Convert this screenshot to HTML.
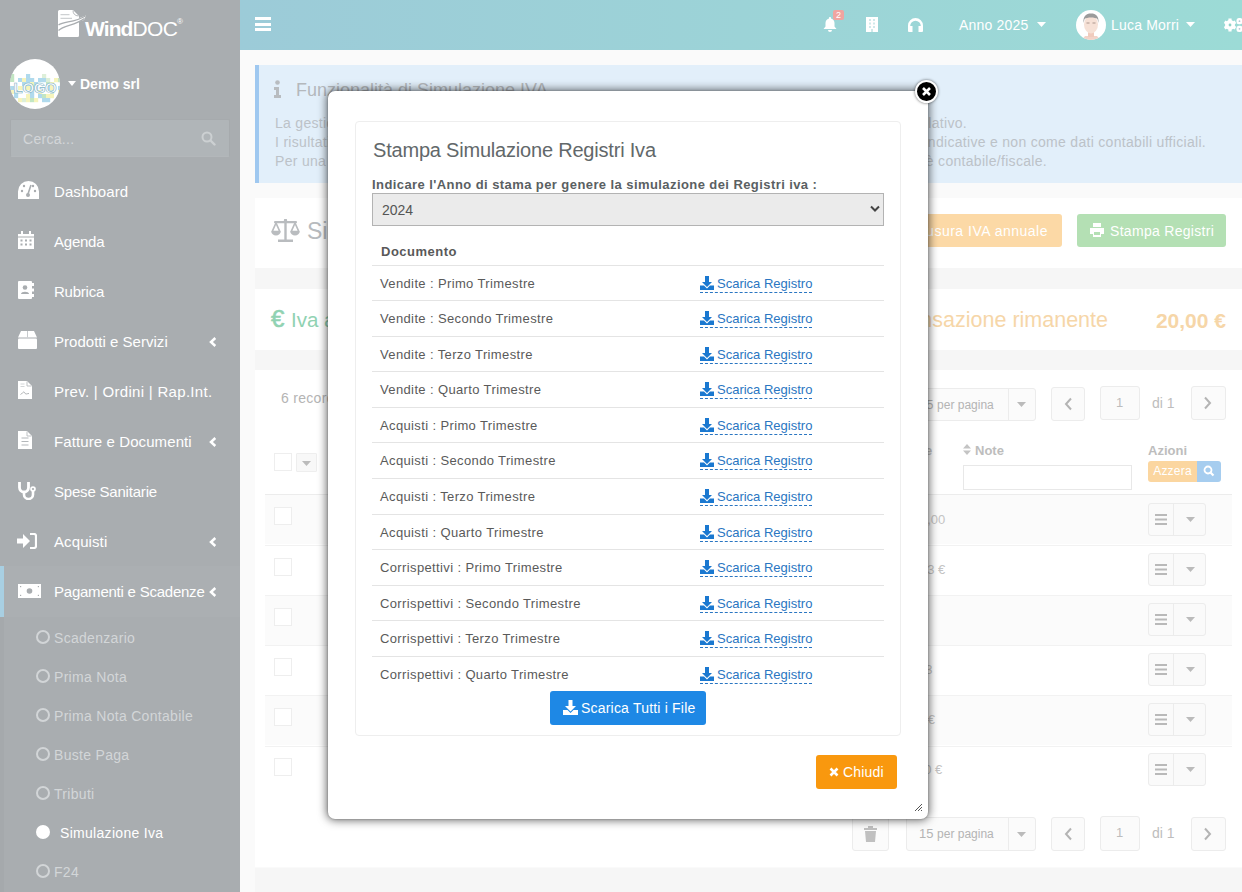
<!DOCTYPE html>
<html><head><meta charset="utf-8">
<style>
*{box-sizing:border-box;margin:0;padding:0}
html,body{width:1242px;height:892px;overflow:hidden}
body{position:relative;background:#fafafa;font-family:"Liberation Sans",sans-serif;color:#333}
.a{position:absolute;white-space:nowrap}
#side{position:absolute;left:0;top:0;width:240px;height:892px;background:#a9adb0}
#hdr{position:absolute;left:240px;top:0;width:1002px;height:50px;background:linear-gradient(90deg,#9ccbd8,#9cdbd6)}
.mi{position:absolute;left:54px;color:#fff;font-size:15px;line-height:20px;white-space:nowrap;letter-spacing:.1px}
.sub{position:absolute;left:54px;color:#d3d6d8;font-size:14px;line-height:20px;white-space:nowrap;letter-spacing:.3px}
.ico{position:absolute;left:17px}
.chev{position:absolute;left:207px;width:10px;height:12px}
.circ{position:absolute;left:36px;width:14px;height:14px;border:2px solid #d2d5d7;border-radius:50%}
.box{position:absolute;left:255px;width:987px;background:#fff}
#modal{position:absolute;left:328px;top:91px;width:600px;height:728px;background:#fff;border-radius:7px;box-shadow:0 0 2px rgba(0,0,0,.3),0 0 10px 1px rgba(0,0,0,.62)}
#panel{position:absolute;left:27px;top:30px;width:546px;height:615px;border:1px solid #eeeeee;border-radius:4px}
.row{position:absolute;left:44px;width:512px;height:36px;border-top:1px solid #e4e4e4}
.rt{position:absolute;left:8px;top:9px;font-size:13px;line-height:18px;color:#5a5a5a;white-space:nowrap;letter-spacing:.37px}
.lk{position:absolute;left:328px;top:9px;font-size:13px;line-height:18px;color:#2a76c2;white-space:nowrap;letter-spacing:0}
.lk .u{position:absolute;left:0;right:0;top:17px;border-bottom:1px dashed #2a76c2}
.lk svg{vertical-align:-2px;margin-right:3px}
.gbtn{position:absolute;border:1px solid #ececec;border-radius:3px;background:#fbfbfb}
.cb{position:absolute;left:274px;width:18px;height:18px;border:1px solid #eeeeee;background:#fff}
.trow{position:absolute;left:265px;width:967px;height:50px;border-top:1px solid #f2f2f2}
.act{position:absolute;left:1148px;width:58px;height:33px;border:1px solid #ececec;border-radius:3px;background:#fafafa}
.act:after{content:"";position:absolute;left:24px;top:0;bottom:0;border-left:1px solid #ececec}
</style></head>
<body>

<!-- SIDEBAR -->
<div id="side">
  <!-- logo -->
  <svg class="a" style="left:57px;top:9px" width="30" height="29" viewBox="0 0 30 29">
    <path d="M2.5 1h13.5l6 6v19.5a1.5 1.5 0 0 1-1.5 1.5H2.5A1.5 1.5 0 0 1 1 26.5V2.5A1.5 1.5 0 0 1 2.5 1z" fill="#fff"/>
    <path d="M16 1.5q0 5 5.5 5.5" fill="none" stroke="#b5b8bb" stroke-width="1"/>
    <rect x="3.5" y="5.2" width="9" height="1" fill="#c3c6c9"/>
    <rect x="3.5" y="8.8" width="11.5" height="1" fill="#c3c6c9"/>
    <path d="M21 9.5L29 6.5L27 11L21 13z" fill="#fff"/>
    <path d="M1.5 16C7 12 17 14 28.5 7" fill="none" stroke="#a9adb0" stroke-width="1.3"/>
    <path d="M1.5 21.5C7 16 17 17 27.5 9.5" fill="none" stroke="#a9adb0" stroke-width="1.3"/>
  </svg>
  <div class="a" style="left:85px;top:17px;font-size:21px;line-height:24px;color:#fff;font-weight:bold;letter-spacing:-.9px">Wind<span style="font-weight:normal;letter-spacing:-.6px">DOC</span></div>
  <div class="a" style="left:177px;top:17px;font-size:8px;line-height:10px;color:#fff">®</div>

  <!-- avatar -->
  <svg class="a" style="left:10px;top:59px" width="50" height="50" viewBox="0 0 50 50">
    <defs><clipPath id="cc"><circle cx="25" cy="25" r="25"/></clipPath></defs>
    <circle cx="25" cy="25" r="25" fill="#fff"/>
    <g clip-path="url(#cc)" opacity=".7"><rect x="0" y="15" width="4.2" height="4.2" fill="#a9dcaa"/><rect x="16" y="15" width="4.2" height="4.2" fill="#8fcbe6"/><rect x="32" y="15" width="4.2" height="4.2" fill="#cfe9c9"/><rect x="0" y="19" width="4.2" height="4.2" fill="#a9dcaa"/><rect x="8" y="19" width="4.2" height="4.2" fill="#8fcbe6"/><rect x="12" y="19" width="4.2" height="4.2" fill="#f3efa0"/><rect x="16" y="19" width="4.2" height="4.2" fill="#8fcbe6"/><rect x="20" y="19" width="4.2" height="4.2" fill="#8fcbe6"/><rect x="28" y="19" width="4.2" height="4.2" fill="#8fcbe6"/><rect x="32" y="19" width="4.2" height="4.2" fill="#8fcbe6"/><rect x="36" y="19" width="4.2" height="4.2" fill="#cfe9c9"/><rect x="44" y="19" width="4.2" height="4.2" fill="#f3efa0"/><rect x="48" y="19" width="4.2" height="4.2" fill="#a9dcaa"/><rect x="0" y="23" width="4.2" height="4.2" fill="#fff"/><rect x="8" y="23" width="4.2" height="4.2" fill="#fff"/><rect x="12" y="23" width="4.2" height="4.2" fill="#8fcbe6"/><rect x="16" y="23" width="4.2" height="4.2" fill="#8fcbe6"/><rect x="20" y="23" width="4.2" height="4.2" fill="#f3efa0"/><rect x="24" y="23" width="4.2" height="4.2" fill="#8fcbe6"/><rect x="36" y="23" width="4.2" height="4.2" fill="#a9dcaa"/><rect x="40" y="23" width="4.2" height="4.2" fill="#f3efa0"/><rect x="0" y="27" width="4.2" height="4.2" fill="#8fcbe6"/><rect x="4" y="27" width="4.2" height="4.2" fill="#fff"/><rect x="8" y="27" width="4.2" height="4.2" fill="#f3efa0"/><rect x="12" y="27" width="4.2" height="4.2" fill="#cfe9c9"/><rect x="16" y="27" width="4.2" height="4.2" fill="#f3efa0"/><rect x="20" y="27" width="4.2" height="4.2" fill="#a9dcaa"/><rect x="24" y="27" width="4.2" height="4.2" fill="#8fcbe6"/><rect x="36" y="27" width="4.2" height="4.2" fill="#8fcbe6"/><rect x="40" y="27" width="4.2" height="4.2" fill="#f3efa0"/><rect x="44" y="27" width="4.2" height="4.2" fill="#fff"/><rect x="48" y="27" width="4.2" height="4.2" fill="#8fcbe6"/><rect x="0" y="31" width="4.2" height="4.2" fill="#f3efa0"/><rect x="4" y="31" width="4.2" height="4.2" fill="#8fcbe6"/><rect x="16" y="31" width="4.2" height="4.2" fill="#fff"/><rect x="20" y="31" width="4.2" height="4.2" fill="#8fcbe6"/><rect x="28" y="31" width="4.2" height="4.2" fill="#f3efa0"/><rect x="40" y="31" width="4.2" height="4.2" fill="#cfe9c9"/><rect x="48" y="31" width="4.2" height="4.2" fill="#f3efa0"/><rect x="0" y="35" width="4.2" height="4.2" fill="#fff"/><rect x="4" y="35" width="4.2" height="4.2" fill="#8fcbe6"/><rect x="12" y="35" width="4.2" height="4.2" fill="#fff"/><rect x="16" y="35" width="4.2" height="4.2" fill="#f3efa0"/><rect x="20" y="35" width="4.2" height="4.2" fill="#8fcbe6"/><rect x="28" y="35" width="4.2" height="4.2" fill="#8fcbe6"/><rect x="32" y="35" width="4.2" height="4.2" fill="#a9dcaa"/><rect x="36" y="35" width="4.2" height="4.2" fill="#f3efa0"/><rect x="40" y="35" width="4.2" height="4.2" fill="#f3efa0"/><rect x="44" y="35" width="4.2" height="4.2" fill="#fff"/><rect x="48" y="35" width="4.2" height="4.2" fill="#8fcbe6"/><rect x="8" y="39" width="4.2" height="4.2" fill="#f3efa0"/><rect x="12" y="39" width="4.2" height="4.2" fill="#cfe9c9"/><rect x="16" y="39" width="4.2" height="4.2" fill="#f3efa0"/><rect x="20" y="39" width="4.2" height="4.2" fill="#a9dcaa"/><rect x="24" y="39" width="4.2" height="4.2" fill="#f3efa0"/><rect x="32" y="39" width="4.2" height="4.2" fill="#8fcbe6"/><rect x="36" y="39" width="4.2" height="4.2" fill="#8fcbe6"/><rect x="48" y="39" width="4.2" height="4.2" fill="#8fcbe6"/></g>
    <text x="25" y="34" text-anchor="middle" font-family="Liberation Sans" font-weight="bold" font-size="15" fill="#fff" stroke="#7fb4c8" stroke-width=".6" letter-spacing="-.3">LOGO</text>
  </svg>
  <svg class="a" style="left:68px;top:81px" width="8" height="5"><path d="M0 0h8L4 5z" fill="#fff"/></svg>
  <div class="a" style="left:80px;top:75px;font-size:14px;line-height:18px;color:#fff;font-weight:bold">Demo srl</div>

  <!-- search -->
  <div class="a" style="left:10px;top:119px;width:220px;height:38px;background:#b0b5b8;border:1px solid #a6aaad;border-bottom-color:#b3b7ba;border-radius:2px"></div>
  <div class="a" style="left:23px;top:130px;font-size:14px;line-height:18px;color:#d3d6d8;letter-spacing:.3px">Cerca...</div>
  <svg class="a" style="left:201px;top:131px" width="15" height="15" viewBox="0 0 15 15"><circle cx="6" cy="6" r="4.5" fill="none" stroke="#ccd0d2" stroke-width="2"/><path d="M9.5 9.5l4 4" stroke="#ccd0d2" stroke-width="2.4" stroke-linecap="round"/></svg>

  <!-- menu -->
  <svg class="ico" style="top:181px;left:18px" width="21" height="18" viewBox="0 0 21 18"><path d="M10.5 0A10.5 10.5 0 0 0 0 10.5V18h21v-7.5A10.5 10.5 0 0 0 10.5 0z" fill="#fff"/><circle cx="4" cy="10" r="1.2" fill="#a9adb0"/><circle cx="6" cy="5" r="1.2" fill="#a9adb0"/><circle cx="15" cy="5" r="1.2" fill="#a9adb0"/><circle cx="17" cy="10" r="1.2" fill="#a9adb0"/><path d="M10 13l3-9" stroke="#a9adb0" stroke-width="1.6"/><circle cx="10" cy="14" r="2" fill="#a9adb0"/></svg>
  <div class="mi" style="top:182px">Dashboard</div>

  <svg class="ico" style="top:231px;left:18px" width="16" height="18" viewBox="0 0 16 18"><rect x="0" y="3" width="16" height="15" fill="#fff"/><rect x="3" y="0" width="2" height="4" fill="#fff"/><rect x="11" y="0" width="2" height="4" fill="#fff"/><rect x="0" y="5.5" width="16" height="1" fill="#a9adb0"/><g fill="#a9adb0"><rect x="2.5" y="8.5" width="2" height="2"/><rect x="7" y="8.5" width="2" height="2"/><rect x="11.5" y="8.5" width="2" height="2"/><rect x="2.5" y="12.5" width="2" height="2"/><rect x="7" y="12.5" width="2" height="2"/><rect x="11.5" y="12.5" width="2" height="2"/></g></svg>
  <div class="mi" style="top:232px;letter-spacing:-0.23px">Agenda</div>

  <svg class="ico" style="top:281px;left:18px" width="16" height="18" viewBox="0 0 16 18"><rect x="0" y="0" width="14" height="18" rx="1" fill="#fff"/><rect x="14" y="2" width="2" height="3" fill="#fff"/><rect x="14" y="7.5" width="2" height="3" fill="#fff"/><rect x="14" y="13" width="2" height="3" fill="#fff"/><circle cx="7" cy="6.5" r="2.3" fill="#a9adb0"/><path d="M3 13c0-3 8-3 8 0z" fill="#a9adb0"/></svg>
  <div class="mi" style="top:282px;letter-spacing:-0.24px">Rubrica</div>

  <svg class="ico" style="top:331px;left:18px" width="19" height="18" viewBox="0 0 19 18"><path d="M3 0h13l3 6.5H0z" fill="#fff"/><rect x="0" y="7.5" width="19" height="10.5" rx="1" fill="#fff"/><rect x="9" y="0" width="1" height="6.5" fill="#c8cbce"/></svg>
  <div class="mi" style="top:332px;letter-spacing:0.02px">Prodotti e Servizi</div>
  <svg class="chev" style="top:336px;left:207px" viewBox="0 0 10 12"><path d="M8.3 2L4 6l4.3 4" fill="none" stroke="#fff" stroke-width="2.5"/></svg>

  <svg class="ico" style="top:381px;left:18px" width="14" height="18" viewBox="0 0 14 18"><path d="M0 0h9l5 5v13H0z" fill="#fff"/><path d="M9 0.5v4.5h4.5" fill="none" stroke="#b8bbbe" stroke-width=".9"/><path d="M2.5 3h4M2.5 5.5h4" stroke="#c8cbce" stroke-width=".8"/><path d="M2.5 13.5c1.5-.5 2.5-3 3.5-2.5s1 2 2 2 1.5-.5 3-.5" fill="none" stroke="#9a9ea1" stroke-width=".8"/></svg>
  <div class="mi" style="top:382px;letter-spacing:0.3px">Prev. | Ordini | Rap.Int.</div>

  <svg class="ico" style="top:431px;left:18px" width="14" height="18" viewBox="0 0 14 18"><path d="M0 0h9l5 5v13H0z" fill="#fff"/><path d="M9 0.5v4.5h4.5" fill="none" stroke="#b8bbbe" stroke-width=".9"/><g fill="#b4b8bb"><rect x="3.5" y="6.5" width="7" height="1"/><rect x="3.5" y="10" width="7" height="1"/><rect x="3.5" y="13.5" width="7" height="1"/></g></svg>
  <div class="mi" style="top:432px">Fatture e Documenti</div>
  <svg class="chev" style="top:436px;left:207px" viewBox="0 0 10 12"><path d="M8.3 2L4 6l4.3 4" fill="none" stroke="#fff" stroke-width="2.5"/></svg>

  <svg class="ico" style="top:481px;left:18px" width="19" height="19" viewBox="0 0 19 19"><path d="M1.5 1v5.5a4.5 4.5 0 0 0 9 0V1" fill="none" stroke="#fff" stroke-width="2.8"/><path d="M6 11v2.5a4.5 4.5 0 0 0 9 0V10" fill="none" stroke="#fff" stroke-width="2.6"/><circle cx="15" cy="8" r="2.8" fill="#fff"/><circle cx="15" cy="8" r="1.1" fill="#a9adb0"/></svg>
  <div class="mi" style="top:482px;letter-spacing:-0.2px">Spese Sanitarie</div>

  <svg class="ico" style="top:533px;left:17px" width="20" height="16" viewBox="0 0 20 16"><path d="M0 5.5h6V1l7 7-7 7v-4.5H0z" fill="#fff"/><path d="M13 1h4a2 2 0 0 1 2 2v10a2 2 0 0 1-2 2h-4" fill="none" stroke="#fff" stroke-width="2.2"/></svg>
  <div class="mi" style="top:532px">Acquisti</div>
  <svg class="chev" style="top:536px;left:207px" viewBox="0 0 10 12"><path d="M8.3 2L4 6l4.3 4" fill="none" stroke="#fff" stroke-width="2.5"/></svg>

  <!-- active -->
  <div class="a" style="left:0;top:566px;width:240px;height:51px;background:#abafb2"></div><div class="a" style="left:0;top:617px;width:4px;height:275px;background:#a5a9ac"></div>
  <div class="a" style="left:0;top:566px;width:4px;height:51px;background:#a8cfe2"></div>
  <svg class="ico" style="top:584px;left:18px" width="23" height="14" viewBox="0 0 23 14"><rect x="0" y="0" width="23" height="14" fill="#fff"/><g fill="#a9adb0"><circle cx="11.5" cy="7" r="2.8"/><rect x="2" y="2" width="1.2" height="1.2"/><rect x="19.8" y="2" width="1.2" height="1.2"/><rect x="2" y="10.8" width="1.2" height="1.2"/><rect x="19.8" y="10.8" width="1.2" height="1.2"/></g></svg>
  <div class="mi" style="top:582px;letter-spacing:-0.23px">Pagamenti e Scadenze</div>
  <svg class="chev" style="top:586px;left:207px" viewBox="0 0 10 12"><path d="M8.3 2L4 6l4.3 4" fill="none" stroke="#fff" stroke-width="2.5"/></svg>

  <div class="circ" style="top:630px"></div><div class="sub" style="top:628px">Scadenzario</div>
  <div class="circ" style="top:669px"></div><div class="sub" style="top:667px">Prima Nota</div>
  <div class="circ" style="top:708px"></div><div class="sub" style="top:706px">Prima Nota Contabile</div>
  <div class="circ" style="top:747px"></div><div class="sub" style="top:745px">Buste Paga</div>
  <div class="circ" style="top:786px"></div><div class="sub" style="top:784px">Tributi</div>
  <div class="a" style="left:36px;top:825px;width:14px;height:14px;border-radius:50%;background:#fff"></div><div class="a" style="top:823px;left:60px;color:#fff;font-size:14px;line-height:20px;letter-spacing:.3px">Simulazione Iva</div>
  <div class="circ" style="top:864px"></div><div class="sub" style="top:862px">F24</div>
</div>

<!-- HEADER -->
<div id="hdr">
  <div class="a" style="left:15px;top:17px;width:16px;height:3px;background:#fff"></div>
  <div class="a" style="left:15px;top:23px;width:16px;height:3px;background:#fff"></div>
  <div class="a" style="left:15px;top:28px;width:16px;height:3px;background:#fff"></div>
</div>
<svg class="a" style="left:823px;top:17px" width="14" height="15" viewBox="0 0 14 15"><path d="M7 0a1.2 1.2 0 0 1 1.2 1.2v.6A4.5 4.5 0 0 1 11.5 6v3.5L13.5 12H.5l2-2.5V6a4.5 4.5 0 0 1 3.3-4.2v-.6A1.2 1.2 0 0 1 7 0zM5 13h4a2 2 0 0 1-4 0z" fill="#fff"/></svg>
<div class="a" style="left:833px;top:10px;width:11px;height:10px;background:#f0a4a0;border-radius:2px;color:#fff;font-size:9px;line-height:10px;text-align:center">2</div>
<svg class="a" style="left:866px;top:17px" width="12" height="15" viewBox="0 0 12 15"><rect x="0" y="0" width="12" height="15" fill="#fff"/><g fill="#cfe9ea"><rect x="3" y="2" width="2" height="2"/><rect x="7" y="2" width="2" height="2"/><rect x="3" y="5.5" width="2" height="2"/><rect x="7" y="5.5" width="2" height="2"/><rect x="3" y="9" width="2" height="2"/><rect x="7" y="9" width="2" height="2"/><rect x="5" y="12" width="2" height="3"/></g></svg>
<svg class="a" style="left:908px;top:18px" width="15" height="14" viewBox="0 0 15 14"><path d="M7.5 0A7.5 7.5 0 0 0 0 7.5V13a1 1 0 0 0 1 1h3.5V8H2.2a5.3 5.3 0 0 1 10.6 0h-2.3v6H14a1 1 0 0 0 1-1V7.5A7.5 7.5 0 0 0 7.5 0z" fill="#fff"/><rect x="7" y="8" width="1" height="6" fill="#9dd3d7" opacity=".0"/></svg>
<div class="a" style="left:959px;top:16px;font-size:14px;line-height:18px;color:#fff;letter-spacing:.2px">Anno 2025</div>
<svg class="a" style="left:1037px;top:22px" width="9" height="5"><path d="M0 0h9L4.5 5z" fill="#fff"/></svg>
<svg class="a" style="left:1076px;top:10px" width="30" height="30" viewBox="0 0 30 30">
  <defs><clipPath id="uc"><circle cx="15" cy="15" r="15"/></clipPath></defs>
  <circle cx="15" cy="15" r="15" fill="#fff"/>
  <g clip-path="url(#uc)">
    <path d="M9 26h12l4 5H5z" fill="#f2d3c8"/>
    <rect x="12" y="20" width="6" height="7" fill="#f0cbbd"/>
    <ellipse cx="15" cy="14.5" rx="7" ry="9" fill="#f6e1d6"/>
    <path d="M7.5 13C7 6 10 3.5 15 3.5S23 6 22.5 13L21.5 9C19 7 11 7 8.5 9z" fill="#9b9b9b"/>
    <path d="M10.5 13h3M16.5 13h3" stroke="#a48f86" stroke-width=".9"/>
  </g>
</svg>
<div class="a" style="left:1111px;top:16px;font-size:14px;line-height:18px;color:#fff;letter-spacing:.2px">Luca Morri</div>
<svg class="a" style="left:1186px;top:22px" width="9" height="5"><path d="M0 0h9L4.5 5z" fill="#fff"/></svg>
<svg class="a" style="left:1224px;top:17px" width="18" height="16" viewBox="0 0 18 16"><g fill="#fff"><circle cx="6" cy="8" r="5"/><g stroke="#fff" stroke-width="3.2"><path d="M6 1.6v12.8M0.5 4.8l11 6.4M0.5 11.2l11-6.4"/></g></g><circle cx="6" cy="8" r="1.4" fill="#8fd3c8"/><g fill="#fff"><rect x="12.5" y="1" width="6" height="6.3" rx="2.5"/><rect x="12.5" y="8.7" width="6" height="6.3" rx="2.5"/></g><circle cx="15.5" cy="4.2" r=".9" fill="#b5c9d8"/><circle cx="15.5" cy="11.8" r=".9" fill="#b5c9d8"/></svg>

<!-- CALLOUT -->
<div class="a" style="left:255px;top:65px;width:987px;height:118px;background:#e2effa;border-left:4px solid #9fc8f0"></div>
<svg class="a" style="left:273px;top:80px" width="9" height="18" viewBox="0 0 9 18"><circle cx="4.5" cy="2.5" r="2.3" fill="#b8bcc0"/><path d="M1 7h5v8h2v3H1v-3h2v-5H1z" fill="#b8bcc0"/></svg>
<div class="a" style="left:296px;top:79px;font-size:18px;line-height:22px;color:#b4b8bc">Funzionalità di Simulazione IVA</div>
<div class="a" style="left:275px;top:114px;font-size:14px;line-height:19px;color:#bcc2c8;letter-spacing:.3px">La gestione<br>I risultati<br>Per una</div>
<div class="a" style="right:275px;top:114px;font-size:14px;line-height:19px;color:#bcc2c8;letter-spacing:.3px;text-align:right">... del periodo relativo.</div>
<div class="a" style="right:36px;top:133px;font-size:14px;line-height:19px;color:#bcc2c8;letter-spacing:.3px;text-align:right">... vanno considerati solo come indicative e non come dati contabili ufficiali.</div>
<div class="a" style="right:195px;top:152px;font-size:14px;line-height:19px;color:#bcc2c8;letter-spacing:.3px;text-align:right">... consultare il proprio consulente, che è contabile/fiscale.</div>

<!-- BOX2 -->
<div class="box" style="top:198px;height:70px"></div>
<svg class="a" style="left:271px;top:219px" width="29" height="23" viewBox="0 0 29 23"><g fill="#b9bcbf"><rect x="13.3" y="0" width="2.4" height="21"/><rect x="3" y="2" width="23" height="2.2" rx="1"/><rect x="7" y="20.5" width="15" height="2.5"/><circle cx="14.5" cy="1.5" r="1.6"/></g><path d="M5 4L1.2 12.5h7.6z M24 4l-3.8 8.5h7.6z" fill="none" stroke="#b9bcbf" stroke-width="1.7" stroke-linejoin="round"/><path d="M0.3 12.5h9.4a4.7 4 0 0 1-9.4 0z M19.3 12.5h9.4a4.7 4 0 0 1-9.4 0z" fill="#b9bcbf"/></svg>
<div class="a" style="left:307px;top:218px;font-size:23px;line-height:26px;color:#b8bbbe">Simulazione IVA</div>
<div class="a" style="left:880px;top:214px;width:182px;height:33px;background:#fcd9a6;border-radius:3px"></div>
<div class="a" style="right:194px;top:222px;font-size:14px;line-height:18px;color:#fff;letter-spacing:.5px">Chiusura IVA annuale</div>
<div class="a" style="left:1077px;top:214px;width:149px;height:33px;background:#b4e0b4;border-radius:3px"></div>
<svg class="a" style="left:1090px;top:223px" width="14" height="14" viewBox="0 0 14 14"><path d="M3 0h8v4H3z M0 5h14v6h-3v3H3v-3H0z" fill="#fff"/><rect x="4" y="9" width="6" height="3" fill="#b4e0b4"/></svg>
<div class="a" style="left:1110px;top:222px;font-size:14px;line-height:18px;color:#fff;letter-spacing:.3px">Stampa Registri</div>

<!-- BOX3 -->
<div class="a" style="left:255px;top:268px;width:987px;height:21px;background:#f6f6f6"></div>
<div class="box" style="top:289px;height:61px"></div>
<div class="a" style="left:271px;top:305px;font-size:24px;line-height:28px;color:#90d2b2;-webkit-text-stroke:.6px #90d2b2">€</div><div class="a" style="left:291px;top:306.5px;font-size:20.5px;line-height:26px;color:#90d2b2">Iva a debito</div>
<div class="a" style="right:134px;top:307px;font-size:21.5px;line-height:26px;color:#f6d6a8">Compensazione rimanente</div>
<div class="a" style="right:16px;top:308px;font-size:21px;line-height:26px;color:#f6d6a8;font-weight:bold">20,00 €</div>
<div class="a" style="left:255px;top:350px;width:987px;height:20px;background:#f6f6f6"></div>

<!-- BOX4 -->
<div class="box" style="top:370px;height:497px"></div>
<div class="a" style="left:281px;top:389px;font-size:14px;line-height:18px;color:#b4b4b4;letter-spacing:.3px">6 record</div>
<!-- top pagination -->
<div class="gbtn" style="left:880px;top:388px;width:156px;height:33px"></div>
<div class="a" style="left:1008px;top:388px;height:33px;border-left:1px solid #ececec"></div>
<div class="a" style="left:919px;top:396px;font-size:13px;line-height:18px;color:#b4b4b4">15 <span style="font-size:12px">per pagina</span></div>
<svg class="a" style="left:1017px;top:402px" width="9" height="5"><path d="M0 0h9L4.5 5z" fill="#bbb"/></svg>
<div class="gbtn" style="left:1051px;top:387px;width:34px;height:34px"></div>
<svg class="a" style="left:1063px;top:397px" width="10" height="14"><path d="M8 1.5L3 7l5 5.5" fill="none" stroke="#b4b4b4" stroke-width="2"/></svg>
<div class="gbtn" style="left:1100px;top:386px;width:40px;height:34px"></div>
<div class="a" style="left:1116px;top:394px;font-size:13px;line-height:18px;color:#bdbdbd">1</div>
<div class="a" style="left:1152px;top:394px;font-size:14px;line-height:18px;color:#bdbdbd">di 1</div>
<div class="gbtn" style="left:1191px;top:386px;width:35px;height:34px"></div>
<svg class="a" style="left:1203px;top:396px" width="10" height="14"><path d="M2 1.5L7 7l-5 5.5" fill="none" stroke="#b4b4b4" stroke-width="2"/></svg>

<!-- table header -->
<div class="cb" style="top:453px"></div>
<div class="gbtn" style="left:296px;top:453px;width:21px;height:19px;border-color:#eeeeee;background:#f8f8f8;border-radius:1px"></div>
<svg class="a" style="left:302px;top:461px" width="9" height="5"><path d="M0 0h9L4.5 5z" fill="#bbb"/></svg>
<div class="a" style="left:925px;top:442px;font-size:13px;line-height:18px;color:#c4c4c4;font-weight:bold">e</div>
<svg class="a" style="left:963px;top:444px" width="8" height="11"><path d="M0 4.5L4 0l4 4.5zM0 6.5h8L4 11z" fill="#c4c4c4"/></svg>
<div class="a" style="left:975px;top:442px;font-size:13px;line-height:18px;color:#bdbdbd;font-weight:bold">Note</div>
<div class="a" style="left:963px;top:465px;width:169px;height:25px;border:1px solid #e8e8e8;background:#fff"></div>
<div class="a" style="left:1148px;top:442px;font-size:13px;line-height:18px;color:#bdbdbd;font-weight:bold">Azioni</div>
<div class="a" style="left:1148px;top:461px;width:49px;height:21px;background:#fbd6a0;border-radius:3px 0 0 3px;color:#fff;font-size:12px;line-height:21px;text-align:center;letter-spacing:.2px">Azzera</div>
<div class="a" style="left:1197px;top:461px;width:24px;height:21px;background:#a6cdef;border-radius:0 3px 3px 0"></div>
<svg class="a" style="left:1203px;top:465px" width="12" height="12" viewBox="0 0 12 12"><circle cx="5" cy="5" r="3.5" fill="none" stroke="#fff" stroke-width="1.8"/><path d="M7.5 7.5l3 3" stroke="#fff" stroke-width="2.2"/></svg>

<!-- table rows -->
<div class="trow" style="top:494px;background:#fbfbfb;border-top-color:#ececec"></div>
<div class="trow" style="top:545px"></div>
<div class="trow" style="top:595px;background:#fbfbfb"></div>
<div class="trow" style="top:645px"></div>
<div class="trow" style="top:695px;background:#fbfbfb"></div>
<div class="trow" style="top:746px"></div>
<div class="cb" style="top:507px"></div>
<div class="cb" style="top:558px"></div>
<div class="cb" style="top:608px"></div>
<div class="cb" style="top:658px"></div>
<div class="cb" style="top:708px"></div>
<div class="cb" style="top:758px"></div>
<div class="a" style="left:920px;top:511px;font-size:13px;line-height:18px;color:#c4c4c4">0,00</div>
<div class="a" style="left:920px;top:561px;font-size:13px;line-height:18px;color:#c4c4c4">33 €</div>
<div class="a" style="left:918px;top:661px;font-size:13px;line-height:18px;color:#c4c4c4">33</div>
<div class="a" style="left:917px;top:711px;font-size:13px;line-height:18px;color:#c4c4c4">0 €</div>
<div class="a" style="left:917px;top:761px;font-size:13px;line-height:18px;color:#c4c4c4">00 €</div>
<div class="act" style="top:503px"><svg class="a" style="left:6px;top:10px" width="12" height="11"><g fill="#b9b9b9"><rect y="0" width="12" height="2"/><rect y="4.5" width="12" height="2"/><rect y="9" width="12" height="2"/></g></svg><svg class="a" style="left:37px;top:13px" width="9" height="5"><path d="M0 0h9L4.5 5z" fill="#bbb"/></svg></div>
<div class="act" style="top:553px"><svg class="a" style="left:6px;top:10px" width="12" height="11"><g fill="#b9b9b9"><rect y="0" width="12" height="2"/><rect y="4.5" width="12" height="2"/><rect y="9" width="12" height="2"/></g></svg><svg class="a" style="left:37px;top:13px" width="9" height="5"><path d="M0 0h9L4.5 5z" fill="#bbb"/></svg></div>
<div class="act" style="top:603px"><svg class="a" style="left:6px;top:10px" width="12" height="11"><g fill="#b9b9b9"><rect y="0" width="12" height="2"/><rect y="4.5" width="12" height="2"/><rect y="9" width="12" height="2"/></g></svg><svg class="a" style="left:37px;top:13px" width="9" height="5"><path d="M0 0h9L4.5 5z" fill="#bbb"/></svg></div>
<div class="act" style="top:653px"><svg class="a" style="left:6px;top:10px" width="12" height="11"><g fill="#b9b9b9"><rect y="0" width="12" height="2"/><rect y="4.5" width="12" height="2"/><rect y="9" width="12" height="2"/></g></svg><svg class="a" style="left:37px;top:13px" width="9" height="5"><path d="M0 0h9L4.5 5z" fill="#bbb"/></svg></div>
<div class="act" style="top:703px"><svg class="a" style="left:6px;top:10px" width="12" height="11"><g fill="#b9b9b9"><rect y="0" width="12" height="2"/><rect y="4.5" width="12" height="2"/><rect y="9" width="12" height="2"/></g></svg><svg class="a" style="left:37px;top:13px" width="9" height="5"><path d="M0 0h9L4.5 5z" fill="#bbb"/></svg></div>
<div class="act" style="top:753px"><svg class="a" style="left:6px;top:10px" width="12" height="11"><g fill="#b9b9b9"><rect y="0" width="12" height="2"/><rect y="4.5" width="12" height="2"/><rect y="9" width="12" height="2"/></g></svg><svg class="a" style="left:37px;top:13px" width="9" height="5"><path d="M0 0h9L4.5 5z" fill="#bbb"/></svg></div>

<!-- bottom pagination -->
<div class="gbtn" style="left:852px;top:817px;width:37px;height:34px"></div>
<svg class="a" style="left:864px;top:826px" width="13" height="16" viewBox="0 0 13 16"><path d="M0 2h13v2H0z M4 0h5v2H4z M1 5h11l-1 11H2z" fill="#c0c0c0"/></svg>
<div class="gbtn" style="left:906px;top:817px;width:130px;height:34px"></div>
<div class="a" style="left:1008px;top:817px;height:34px;border-left:1px solid #ececec"></div>
<div class="a" style="left:919px;top:825px;font-size:13px;line-height:18px;color:#b4b4b4">15 <span style="font-size:12px">per pagina</span></div>
<svg class="a" style="left:1017px;top:832px" width="9" height="5"><path d="M0 0h9L4.5 5z" fill="#bbb"/></svg>
<div class="gbtn" style="left:1051px;top:817px;width:34px;height:34px"></div>
<svg class="a" style="left:1063px;top:827px" width="10" height="14"><path d="M8 1.5L3 7l5 5.5" fill="none" stroke="#b4b4b4" stroke-width="2"/></svg>
<div class="gbtn" style="left:1100px;top:816px;width:40px;height:35px"></div>
<div class="a" style="left:1116px;top:824px;font-size:13px;line-height:18px;color:#bdbdbd">1</div>
<div class="a" style="left:1152px;top:824px;font-size:14px;line-height:18px;color:#bdbdbd">di 1</div>
<div class="gbtn" style="left:1191px;top:817px;width:35px;height:34px"></div>
<svg class="a" style="left:1203px;top:827px" width="10" height="14"><path d="M2 1.5L7 7l-5 5.5" fill="none" stroke="#b4b4b4" stroke-width="2"/></svg>
<div class="a" style="left:255px;top:868px;width:987px;height:24px;background:#f6f6f6"></div>

<!-- MODAL -->
<div id="modal">
  <div id="panel"></div>
  <div class="a" style="left:45px;top:47px;font-size:20px;line-height:24px;color:#62686a;letter-spacing:-.2px">Stampa Simulazione Registri Iva</div>
  <div class="a" style="left:44px;top:85px;font-size:13px;line-height:18px;color:#5a6062;font-weight:bold;letter-spacing:.42px">Indicare l'Anno di stama per genere la simulazione dei Registri iva :</div>
  <div class="a" style="left:44px;top:102px;width:512px;height:33px;background:#ebebeb;border:1px solid #b3b3b3;border-radius:0"></div>
  <div class="a" style="left:54px;top:110px;font-size:14px;line-height:18px;color:#555">2024</div>
  <svg class="a" style="left:542px;top:114px" width="10" height="8"><path d="M1 1.5l4 4 4-4" fill="none" stroke="#444" stroke-width="2"/></svg>
  <div class="a" style="left:53px;top:152px;font-size:13px;line-height:18px;color:#595959;font-weight:bold;letter-spacing:.5px">Documento</div>
  <div class="row" style="top:174px"><div class="rt">Vendite : Primo Trimestre</div><div class="lk"><svg width="14" height="14" viewBox="0 0 14 14"><path d="M5 0h4v6h3L7 11 2 6h3z" fill="#1a78d0"/><path d="M0 9.5h4l3 3 3-3h4V14H0z" fill="#1a78d0"/></svg>Scarica Registro<div class="u"></div></div></div>
  <div class="row" style="top:209px"><div class="rt">Vendite : Secondo Trimestre</div><div class="lk"><svg width="14" height="14" viewBox="0 0 14 14"><path d="M5 0h4v6h3L7 11 2 6h3z" fill="#1a78d0"/><path d="M0 9.5h4l3 3 3-3h4V14H0z" fill="#1a78d0"/></svg>Scarica Registro<div class="u"></div></div></div>
  <div class="row" style="top:245px"><div class="rt">Vendite : Terzo Trimestre</div><div class="lk"><svg width="14" height="14" viewBox="0 0 14 14"><path d="M5 0h4v6h3L7 11 2 6h3z" fill="#1a78d0"/><path d="M0 9.5h4l3 3 3-3h4V14H0z" fill="#1a78d0"/></svg>Scarica Registro<div class="u"></div></div></div>
  <div class="row" style="top:280px"><div class="rt">Vendite : Quarto Trimestre</div><div class="lk"><svg width="14" height="14" viewBox="0 0 14 14"><path d="M5 0h4v6h3L7 11 2 6h3z" fill="#1a78d0"/><path d="M0 9.5h4l3 3 3-3h4V14H0z" fill="#1a78d0"/></svg>Scarica Registro<div class="u"></div></div></div>
  <div class="row" style="top:316px"><div class="rt">Acquisti : Primo Trimestre</div><div class="lk"><svg width="14" height="14" viewBox="0 0 14 14"><path d="M5 0h4v6h3L7 11 2 6h3z" fill="#1a78d0"/><path d="M0 9.5h4l3 3 3-3h4V14H0z" fill="#1a78d0"/></svg>Scarica Registro<div class="u"></div></div></div>
  <div class="row" style="top:351px"><div class="rt">Acquisti : Secondo Trimestre</div><div class="lk"><svg width="14" height="14" viewBox="0 0 14 14"><path d="M5 0h4v6h3L7 11 2 6h3z" fill="#1a78d0"/><path d="M0 9.5h4l3 3 3-3h4V14H0z" fill="#1a78d0"/></svg>Scarica Registro<div class="u"></div></div></div>
  <div class="row" style="top:387px"><div class="rt">Acquisti : Terzo Trimestre</div><div class="lk"><svg width="14" height="14" viewBox="0 0 14 14"><path d="M5 0h4v6h3L7 11 2 6h3z" fill="#1a78d0"/><path d="M0 9.5h4l3 3 3-3h4V14H0z" fill="#1a78d0"/></svg>Scarica Registro<div class="u"></div></div></div>
  <div class="row" style="top:423px"><div class="rt">Acquisti : Quarto Trimestre</div><div class="lk"><svg width="14" height="14" viewBox="0 0 14 14"><path d="M5 0h4v6h3L7 11 2 6h3z" fill="#1a78d0"/><path d="M0 9.5h4l3 3 3-3h4V14H0z" fill="#1a78d0"/></svg>Scarica Registro<div class="u"></div></div></div>
  <div class="row" style="top:458px"><div class="rt">Corrispettivi : Primo Trimestre</div><div class="lk"><svg width="14" height="14" viewBox="0 0 14 14"><path d="M5 0h4v6h3L7 11 2 6h3z" fill="#1a78d0"/><path d="M0 9.5h4l3 3 3-3h4V14H0z" fill="#1a78d0"/></svg>Scarica Registro<div class="u"></div></div></div>
  <div class="row" style="top:494px"><div class="rt">Corrispettivi : Secondo Trimestre</div><div class="lk"><svg width="14" height="14" viewBox="0 0 14 14"><path d="M5 0h4v6h3L7 11 2 6h3z" fill="#1a78d0"/><path d="M0 9.5h4l3 3 3-3h4V14H0z" fill="#1a78d0"/></svg>Scarica Registro<div class="u"></div></div></div>
  <div class="row" style="top:529px"><div class="rt">Corrispettivi : Terzo Trimestre</div><div class="lk"><svg width="14" height="14" viewBox="0 0 14 14"><path d="M5 0h4v6h3L7 11 2 6h3z" fill="#1a78d0"/><path d="M0 9.5h4l3 3 3-3h4V14H0z" fill="#1a78d0"/></svg>Scarica Registro<div class="u"></div></div></div>
  <div class="row" style="top:565px"><div class="rt">Corrispettivi : Quarto Trimestre</div><div class="lk"><svg width="14" height="14" viewBox="0 0 14 14"><path d="M5 0h4v6h3L7 11 2 6h3z" fill="#1a78d0"/><path d="M0 9.5h4l3 3 3-3h4V14H0z" fill="#1a78d0"/></svg>Scarica Registro<div class="u"></div></div></div>
  <div class="a" style="left:222px;top:600px;width:156px;height:34px;background:#1e88e5;border-radius:3px"></div>
  <svg class="a" style="left:235px;top:609px" width="15" height="15" viewBox="0 0 15 15"><path d="M5.5 0h4v6h3.5L7.5 11.5 2 6h3.5z" fill="#fff"/><path d="M0 10h4.5l3 3 3-3H15v5H0z" fill="#fff"/></svg>
  <div class="a" style="left:253px;top:608px;font-size:14px;line-height:18px;color:#fff;letter-spacing:.2px">Scarica Tutti i File</div>
  <div class="a" style="left:488px;top:664px;width:81px;height:34px;background:#f9980e;border-radius:3px"></div>
  <svg class="a" style="left:501px;top:676px" width="10" height="10" viewBox="0 0 10 10"><path d="M1.5 1.5l7 7M8.5 1.5l-7 7" stroke="#fff" stroke-width="2.6"/></svg>
  <div class="a" style="left:515px;top:672px;font-size:14px;line-height:18px;color:#fff;letter-spacing:.2px">Chiudi</div>
  <svg class="a" style="left:586px;top:712px" width="9" height="9" viewBox="0 0 9 9"><path d="M8 1L1 8M8 4L4 8M8 7L7 8" stroke="#555" stroke-width="1"/></svg>
</div>
<!-- close button -->
<div class="a" style="left:915px;top:80px;width:23px;height:23px;border-radius:50%;background:#000;border:2px solid #fff;box-shadow:0 0 3px rgba(0,0,0,.6)"></div>
<svg class="a" style="left:920px;top:85px" width="13" height="13" viewBox="0 0 13 13"><path d="M3 3l7 7M10 3l-7 7" stroke="#fff" stroke-width="2.6"/></svg>

</body></html>
